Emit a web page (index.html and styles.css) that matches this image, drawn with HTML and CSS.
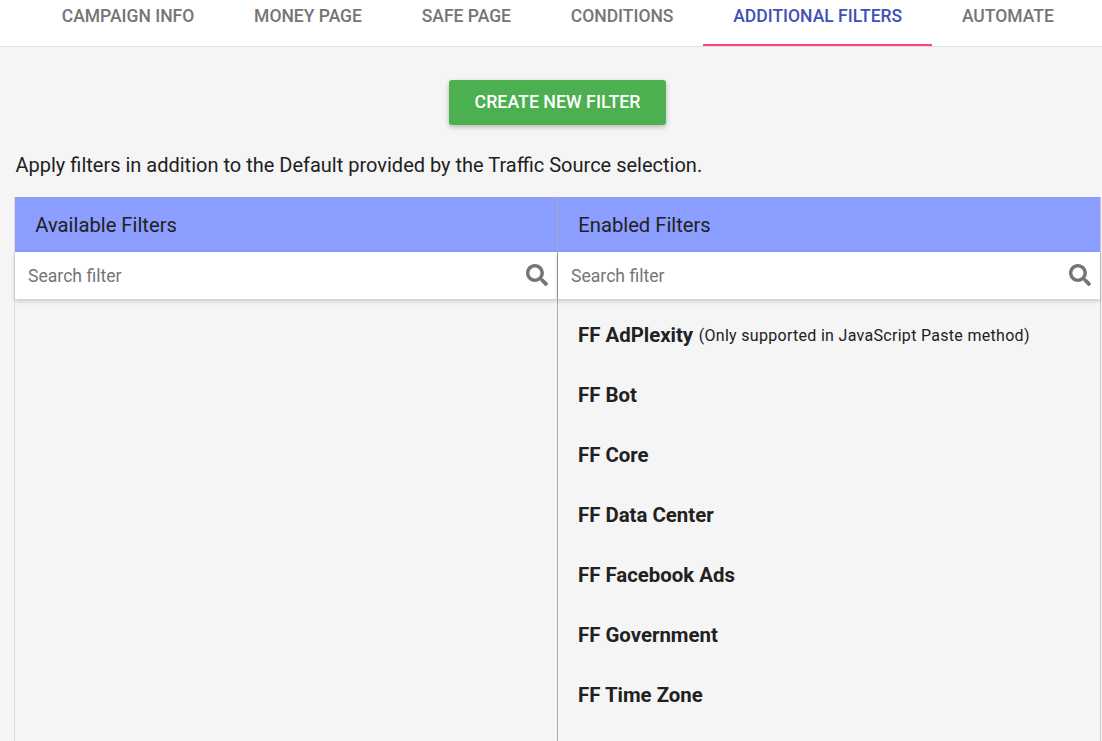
FILE: index.html
```html
<!DOCTYPE html>
<html lang="en">
<head>
<meta charset="utf-8">
<title>Additional Filters</title>
<link rel="stylesheet" href="styles.css">
</head>
<body>
<nav class="tabs">
  <a class="tab">CAMPAIGN INFO</a>
  <a class="tab">MONEY PAGE</a>
  <a class="tab">SAFE PAGE</a>
  <a class="tab">CONDITIONS</a>
  <a class="tab active">ADDITIONAL FILTERS</a>
  <a class="tab">AUTOMATE</a>
</nav>
<main class="content">
  <div class="actions"><button class="create">CREATE NEW FILTER</button></div>
  <p class="intro">Apply filters in addition to the Default provided by the Traffic Source selection.</p>
  <div class="panels">
    <section class="panel">
      <h2 class="panel-title">Available Filters</h2>
      <div class="search">
        <span class="placeholder">Search filter</span>
        <svg class="icon" viewBox="0 0 512 512"><path d="M505 442.7L405.3 343c-4.5-4.5-10.6-7-17-7H372c27.6-35.3 44-79.7 44-128C416 93.1 322.9 0 208 0S0 93.1 0 208s93.1 208 208 208c48.3 0 92.7-16.4 128-44v16.3c0 6.4 2.5 12.5 7 17l99.7 99.7c9.4 9.4 24.6 9.4 33.9 0l28.3-28.3c9.4-9.4 9.4-24.6.1-34zM208 336c-70.7 0-128-57.2-128-128 0-70.7 57.2-128 128-128 70.7 0 128 57.2 128 128 0 70.7-57.2 128-128 128z"/></svg>
      </div>
    </section>
    <section class="panel">
      <h2 class="panel-title">Enabled Filters</h2>
      <div class="search">
        <span class="placeholder">Search filter</span>
        <svg class="icon" viewBox="0 0 512 512"><path d="M505 442.7L405.3 343c-4.5-4.5-10.6-7-17-7H372c27.6-35.3 44-79.7 44-128C416 93.1 322.9 0 208 0S0 93.1 0 208s93.1 208 208 208c48.3 0 92.7-16.4 128-44v16.3c0 6.4 2.5 12.5 7 17l99.7 99.7c9.4 9.4 24.6 9.4 33.9 0l28.3-28.3c9.4-9.4 9.4-24.6.1-34zM208 336c-70.7 0-128-57.2-128-128 0-70.7 57.2-128 128-128 70.7 0 128 57.2 128 128 0 70.7-57.2 128-128 128z"/></svg>
      </div>
      <ul class="list">
        <li class="item"><b>FF AdPlexity</b> <small>(Only supported in JavaScript Paste method)</small></li>
        <li class="item"><b>FF Bot</b></li>
        <li class="item"><b>FF Core</b></li>
        <li class="item"><b>FF Data Center</b></li>
        <li class="item"><b>FF Facebook Ads</b></li>
        <li class="item"><b>FF Government</b></li>
        <li class="item"><b>FF Time Zone</b></li>
      </ul>
    </section>
  </div>
</main>
</body>
</html>
```

FILE: styles.css
```css
* { box-sizing: border-box; }
html, body { margin: 0; height: 100%; overflow: hidden; }
body { background: #f5f5f5; font-family: Roboto, "Liberation Sans", sans-serif; color: #212121; }

.tabs {
  display: flex;
  justify-content: flex-start;
  height: 47px;
  padding-left: 31.9px;
  background: #fff;
  border-bottom: 1px solid #e0e0e0;
}
.tab {
  display: block;
  height: 46px;
  padding: 6px 29.9px 0;
  font-size: 17.5px;
  font-weight: 500;
  line-height: 20px;
  color: #757575;
  letter-spacing: 0;
}
.tab.active { color: #3f51b5; border-bottom: 2px solid #ff4081; }

.content { padding: 33px 1px 0 14px; }
.actions { display: flex; justify-content: center; }
.create {
  width: 217px;
  height: 45px;
  padding: 0 0 2px;
  border: 0;
  border-radius: 3px;
  background: #4caf50;
  color: #fff;
  font: 500 17.8px Roboto, sans-serif;
  box-shadow: 0 2px 5px rgba(0,0,0,.26);
}
.intro { margin: 27px 0 19px 1.5px; font-size: 20px; line-height: 26px; color: #212121; }

.panels {
  display: grid;
  grid-template-columns: 543px 543px;
  height: 560px;
  border-left: 1px solid #ddd;
}
.panel { border-right: 1px solid #aaa; }
.panel:last-child { border-right-color: #c8c8c8; }
.panel-title {
  margin: 0;
  height: 55px;
  padding-left: 20.3px;
  background: #8c9eff;
  font-size: 20.2px;
  font-weight: 400;
  line-height: 56px;
  color: #212121;
}
.search {
  display: flex;
  align-items: center;
  justify-content: space-between;
  height: 47px;
  padding: 0 9px 0 13px;
  background: #fff;
  box-shadow: 0 2px 5px rgba(0,0,0,.2);
}
.placeholder { font-size: 17.6px; color: #757575; }
.icon { width: 22px; height: 22px; margin-top: -2px; fill: #757575; }

.list { list-style: none; margin: 6px 0 0; padding: 0 0 0 20px; }
.item { height: 60px; line-height: 60px; font-size: 20.4px; white-space: nowrap; color: #212121; }
.item b { font-weight: 700; }
.item small { font-size: 16px; letter-spacing: .3px; margin-left: 0.5px; position: relative; top: -1px; }
```
